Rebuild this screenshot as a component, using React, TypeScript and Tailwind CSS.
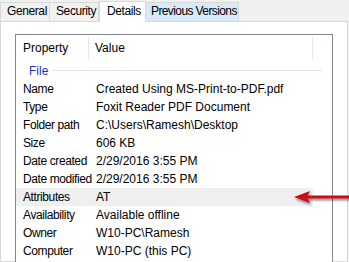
const rows: [string, string][] = [
  ['Name', 'Created Using MS-Print-to-PDF.pdf'],
  ['Type', 'Foxit Reader PDF Document'],
  ['Folder path', 'C:\\Users\\Ramesh\\Desktop'],
  ['Size', '606 KB'],
  ['Date created', '2/29/2016 3:55 PM'],
  ['Date modified', '2/29/2016 3:55 PM'],
  ['Attributes', 'AT'],
  ['Availability', 'Available offline'],
  ['Owner', 'W10-PC\\Ramesh'],
  ['Computer', 'W10-PC (this PC)'],
];

function Arrow() {
  return (
    <svg
      className="absolute left-[290px] top-[186px]"
      width="59"
      height="24"
      viewBox="0 0 59 24"
    >
      <defs>
        <filter id="sh" x="-20%" y="-50%" width="140%" height="200%">
          <feDropShadow dx="1" dy="2" stdDeviation="1.2" floodColor="#000" floodOpacity="0.45" />
        </filter>
      </defs>
      <g filter="url(#sh)">
        <rect x="16" y="9.5" width="43" height="3" fill="#c8101a" />
        <polygon points="4,11 20,5 17,11 20,17" fill="#c8101a" />
      </g>
    </svg>
  );
}

export default function App() {
  return (
    <div
      className="relative w-[349px] h-[262px] overflow-hidden bg-[#f0f0f0] text-[12px] text-black whitespace-nowrap"
      style={{ fontFamily: '"Liberation Sans", Arial, sans-serif' }}
    >
      {/* tab strip */}
      <div className="flex h-[21px] items-end tracking-[-0.4px]">
        <div className="h-[19px] w-[50px] border border-b-0 border-[#d9d9d9] bg-[#f0f0f0] pl-[6px] leading-[17px]">
          General
        </div>
        <div className="h-[19px] w-[49px] border border-b-0 border-l-0 border-[#d9d9d9] bg-[#f0f0f0] pl-[6px] leading-[17px]">
          Security
        </div>
        <div className="relative z-10 h-[21px] w-[47px] border border-b-0 border-[#d9d9d9] bg-white pl-[7px] leading-[19px] -mb-px">
          Details
        </div>
        <div className="h-[19px] w-[93px] overflow-hidden border border-b-0 border-l-0 border-[#d9d9d9] bg-[#d8eaf9] pl-[5px] leading-[17px] tracking-[-0.6px]">
          Previous Versions
        </div>
      </div>

      {/* panel */}
      <div className="h-[241px] w-[348px] border border-[#d9d9d9] bg-white pl-[14px] pt-[12px]">
        <div className="h-[240px] w-[318px] border border-[#828790] bg-white">
          {/* header */}
          <div className="flex h-[26px] items-center">
            <div className="flex h-[22px] w-[73px] items-center border-r border-[#e5e5e5] pl-[7px]">
              Property
            </div>
            <div className="flex h-[22px] w-[224px] items-center border-r border-[#e5e5e5] pl-[6px]">
              Value
            </div>
          </div>
          {/* group */}
          <div className="flex h-[19px] items-center pl-[13px]">
            <span className="text-[#1e32c0]">File</span>
            <div className="ml-[4px] h-px w-[270px] bg-[#dde6f2]" />
          </div>
          {/* rows */}
          {rows.map(([k, v]) => (
            <div
              key={k}
              className={`flex h-[18px] w-[297px] items-center ${k === 'Attributes' ? 'bg-[#efefef]' : ''}`}
            >
              <div className="w-[73px] shrink-0 pl-[7px] tracking-[-0.4px]">{k}</div>
              <div className="pl-[7px]">{v}</div>
            </div>
          ))}
        </div>
      </div>

      <Arrow />
    </div>
  );
}
